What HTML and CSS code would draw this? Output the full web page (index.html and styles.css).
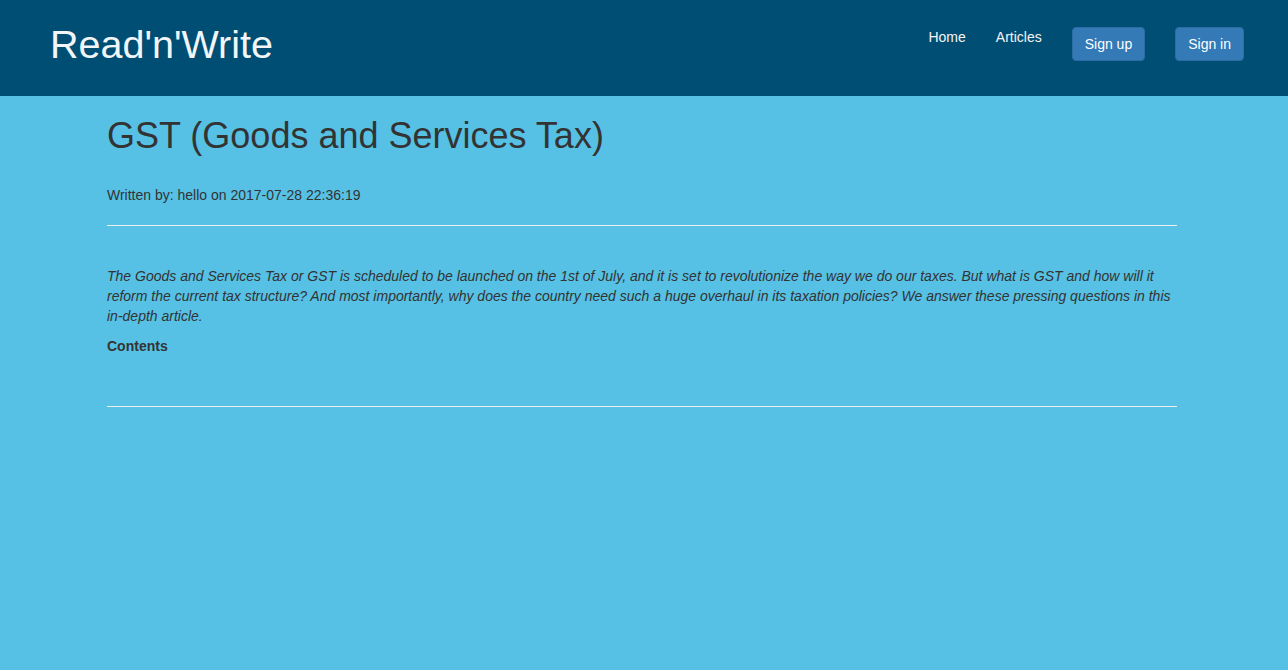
FILE: index.html
```html
<!DOCTYPE html>
<html lang="en">
<head>
<meta charset="utf-8">
<title>Read'n'Write</title>
<link rel="stylesheet" href="styles.css">
</head>
<body>
<header class="topbar">
  <a class="brand" href="#">Read'n'Write</a>
  <nav class="nav">
    <a class="nav-link" href="#">Home</a>
    <a class="nav-link" href="#">Articles</a>
    <a class="btn" href="#">Sign up</a>
    <a class="btn" href="#">Sign in</a>
  </nav>
</header>
<main class="article">
  <h1 class="title">GST (Goods and Services Tax)</h1>
  <p class="meta">Written by: hello on 2017-07-28 22:36:19</p>
  <hr class="rule">
  <div class="content">
    <p class="lead"><em>The Goods and Services Tax or GST is scheduled to be launched on the 1st of July, and it is set to revolutionize the way we do our taxes. But what is GST and how will it reform the current tax structure? And most importantly, why does the country need such a huge overhaul in its taxation policies? We answer these pressing questions in this in-depth article.</em></p>
    <p class="contents"><strong>Contents</strong></p>
  </div>
  <hr class="rule">
</main>
</body>
</html>
```

FILE: styles.css
```css
* { box-sizing: border-box; }
html, body { margin: 0; padding: 0; }
body {
  background: #56c1e4;
  font-family: "Liberation Sans", Arial, sans-serif;
  font-size: 14px;
  line-height: 20px;
  color: #333333;
  min-height: 670px;
}
.topbar {
  background: #004e73;
  height: 96px;
  display: flex;
  justify-content: space-between;
  align-items: flex-start;
  padding: 0 44px 0 50px;
}
.brand {
  color: #f2f6f8;
  text-decoration: none;
  font-size: 39.5px;
  line-height: 46px;
  margin-top: 21px;
}
.nav {
  display: flex;
  align-items: flex-start;
  gap: 30px;
  padding-top: 27px;
}
.nav-link {
  color: #f4f4f4;
  text-decoration: none;
  line-height: 20px;
}
.btn {
  display: inline-block;
  background: #337ab7;
  border: 1px solid #2e6da4;
  border-radius: 4px;
  color: #ffffff;
  text-decoration: none;
  padding: 6px 12px;
  line-height: 20px;
}
.article {
  margin: 0 111px 0 107px;
}
.title {
  font-size: 36px;
  font-weight: 500;
  line-height: 1.1;
  margin: 20px 0 0;
}
.meta {
  margin: 29px 0 0;
}
.rule {
  border: 0;
  border-top: 1px solid #eeeeee;
  margin: 20px 0;
  height: 0;
}
.content {
  padding-top: 20px;
}
.lead {
  margin: 0 0 10px;
}
.contents {
  margin: 0 0 50px;
}
```
